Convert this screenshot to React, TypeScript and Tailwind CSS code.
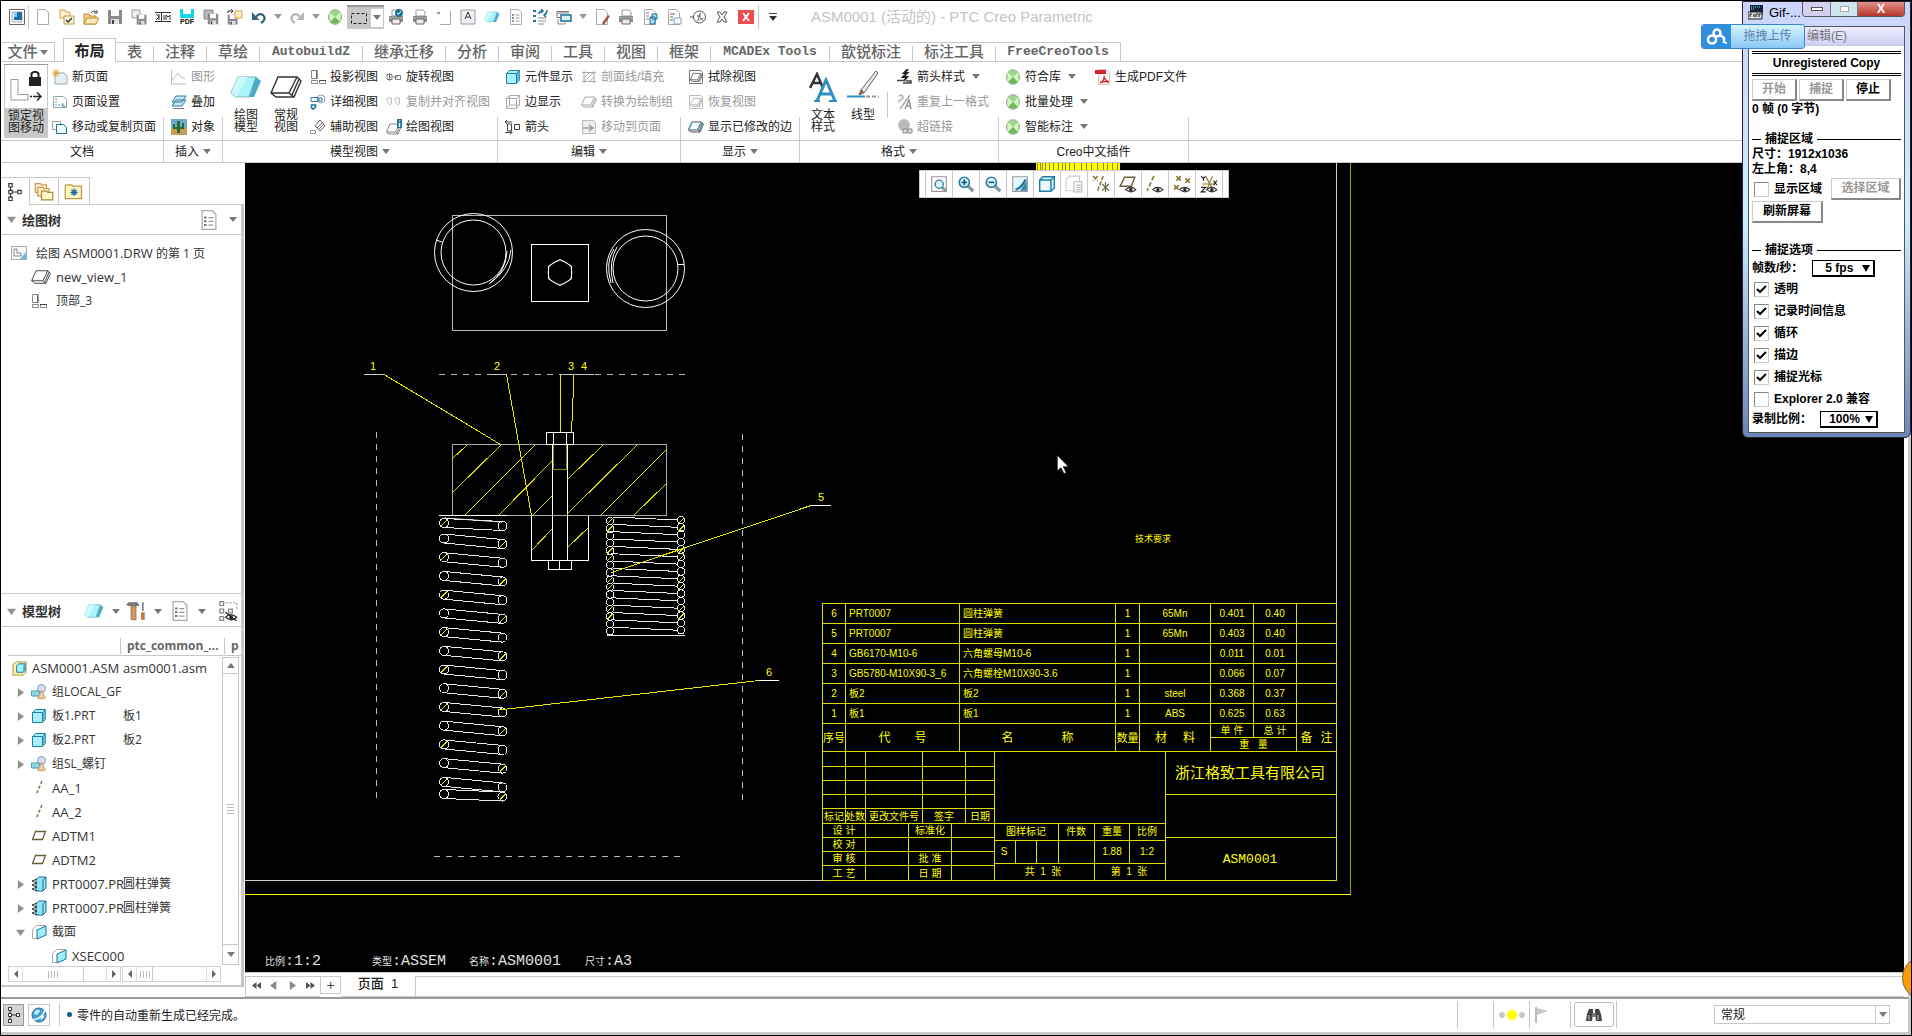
import { ReactNode } from "react";

const LINE = "#c8c8c8";

/* ---------- icons, all drawn on a 16x16 grid ---------- */

const page = <path d="M2.500 .5h8l3 3v12h-11z" fill="#fff" stroke="#aaa" />;
const disk = (
  <>
    <path d="M1 1h14v14H1z" fill="#8a8a8a" />
    <path d="M4 1h8v6H4z" fill="#fff" />
    <path d="M4 10h8v5H4z" fill="#ddd" />
    <path d="M5 11h2v4H5z" fill="#444" />
  </>
);
const printer = (
  <>
    <path d="M4 1h7l2 2v4H4z" fill="#fff" stroke="#999" />
    <path d="M1 7h14v6H1z" fill="#8c8c8c" />
    <path d="M1 9h14" stroke="#b5b5b5" />
    <path d="M4 10h8v5H4z" fill="#eee" stroke="#666" />
  </>
);
const slab = (
  <>
    <path d="M4 3h9L9.500 13H3L.5 11z" fill="#a9f3fb" stroke="#7fb6c4" strokeWidth=".6" />
    <path d="M4 3h5L3 13 .5 11z" fill="#c9fafd" />
    <path d="M13 3l2.500 2-3.500 8H9.500z" fill="#4fa9c8" />
  </>
);
const slabLine = (c: string, w = 1) => (
  <path
    d="M4 3h9.500L15.500 5 12 13H3L.5 11zM.5 11h9l2.500 2M13.500 3L9.500 11M14.500 4l-3.500 8"
    fill="none"
    stroke={c}
    strokeWidth={w}
  />
);
const cube = (c: string) => (
  <>
    <path d="M1.500 4.500l3-3h10v10l-3 3h-10z" fill={c} stroke="#1d7fa8" />
    <path d="M11.500 4.500l3-3v10l-3 3z" fill="#5fb9d8" />
    <path d="M11.500 14.500v-10h-10M11.500 4.500l3-3" fill="none" stroke="#1d7fa8" />
  </>
);
const list = (
  <>
    {page}
    <path d="M4 6h2M4 9h2M4 12h2" stroke="#777" strokeWidth="1.500" />
    <path d="M7.500 6h4M7.500 9h4M7.500 12h4" stroke="#999" />
  </>
);
const ball = (
  <>
    <ellipse cx="8" cy="8" rx="6.500" ry="7.300" fill="#9bd88a" stroke="#9aa69a" />
    <path d="M2.500 3l5.500 5-5.500 5zM13.500 3L8 8l5.500 5z" fill="#d2f6bd" />
    <path d="M3.500 13L8 8l4.500 5c-3 2-6 2-9 0z" fill="#6fb95c" />
  </>
);
const lens = (
  <>
    <path d="M9.500 9.500l5 5" stroke="#8a9aa3" strokeWidth="3" />
    <circle cx="6.500" cy="6.500" r="4.500" fill="#dff4fb" stroke="#2c7fa5" strokeWidth="1.500" />
  </>
);
const eye = (
  <>
    <path d="M6 13q4-4 9 0-4 4-9 0z" fill="#fff" stroke="#333" />
    <circle cx="10.500" cy="13" r="1.500" fill="#222" />
  </>
);
const curl = (c: string) => (
  <>
    <path d="M5 8Q8 3.500 12 6q4 4-2 8" fill="none" stroke={c} strokeWidth="2.200" />
    <path d="M1 3v8h7.500z" fill={c} />
  </>
);

const ICONS: Record<string, ReactNode> = {
  logo: (
    <>
      <path d="M.5 .5h15v15H.5z" fill="#fff" stroke="#666" />
      <path d="M3 3h10v10H3z" fill="#e8f0f4" stroke="#888" strokeWidth=".6" />
      <path d="M5 3h8v8H5z" fill="#1b6fa3" />
      <path d="M5 3h3v5H5z" fill="#7ed0ee" />
    </>
  ),
  page,
  openCheck: (
    <>
      <path d="M1 1h5l1 2h4v6H1z" fill="#fff3cf" stroke="#d39b3e" />
      <path d="M5 7h10v8H5z" fill="#fff9dd" stroke="#b99a4b" />
      <path d="M7 11l2 2 4-4" fill="none" stroke="#333" strokeWidth="1.500" />
    </>
  ),
  open: (
    <>
      <path d="M1 5h5l1 2h6v8H1z" fill="#f5cf7a" stroke="#b98b3a" />
      <path d="M4 9h12l-3 6H1z" fill="#fde9b2" stroke="#b98b3a" />
      <path d="M8 4q3-4 6 0M14 1v3h-3" fill="none" stroke="#444" />
    </>
  ),
  disk,
  diskPage: (
    <>
      <path d="M1 1h8v8H1z" fill="#eee" stroke="#999" />
      <g transform="translate(5 5) scale(.7)">{disk}</g>
    </>
  ),
  dim: (
    <>
      <path d="M0 3.500h16M0 12.500h16M6.500 3v10" stroke="#333" />
      <path d="M1 5l3 3-3 3M4 5v6M9 11V6M11 11V6l2 2 2-2v5" fill="none" stroke="#333" />
    </>
  ),
  pdf: (
    <>
      <path d="M1 0h14v9H1z" fill="#12d7e4" />
      <path d="M4 0h8v5H4z" fill="#fff" />
      <text x="8" y="15" textAnchor="middle" fontSize="7" fontWeight="900" fontFamily="Liberation Sans" fill="#111">PDF</text>
    </>
  ),
  disks: (
    <>
      <path d="M1 1h9v9H1z" fill="#bbb" stroke="#888" />
      <g transform="translate(4 4) scale(.75)">{disk}</g>
    </>
  ),
  diskOut: (
    <>
      <g transform="translate(0 5) scale(.7)">{disk}</g>
      <path d="M8 2h7v7H8z" fill="#fff0c0" stroke="#d0a050" />
      <path d="M1 4V2h5M4 0l2 2-2 2" fill="none" stroke="#333" />
    </>
  ),
  undo: curl("#336270"),
  redo: <g transform="translate(16 0) scale(-1 1)">{curl("#b5b5b5")}</g>,
  ball,
  select: <path d="M.5 3.500h15v10H.5z" fill="none" stroke="#222" strokeDasharray="3 2" />,
  printCheck: (
    <>
      {printer}
      <circle cx="11" cy="4" r="4" fill="#1d6f9c" />
      <path d="M9 4l1.500 1.500L13 2" fill="none" stroke="#fff" />
    </>
  ),
  printer,
  sheet: (
    <>
      <path d="M14.500 2v13M4 15.500h11" stroke="#aaa" />
      <path d="M1 4h3" stroke="#333" />
    </>
  ),
  letterA: (
    <>
      <path d="M1 1h14v14H1z" fill="#eef0f5" stroke="#999" />
      <path d="M5 10l3-7 3 7M6 8h4" fill="none" stroke="#333" />
    </>
  ),
  slab,
  list,
  listSync: (
    <>
      <path d="M1 2h3M1 7h3M1 12h3" stroke="#1d6f9c" strokeWidth="2" />
      <path d="M6 9h8M6 12h8M6 15h6" stroke="#888" />
      <path d="M7 5q0-3 4-3M9 0l2 2-2 2M15 1q0 4-3 5M14 8l-2-2 2-2" fill="none" stroke="#1d6f9c" strokeWidth="1.500" />
    </>
  ),
  windows: (
    <>
      <path d="M1 2.500h12M1 2.500v6h3M1 4h12" fill="none" stroke="#777" />
      <path d="M5 6h10v6H5z" fill="#dff1f8" stroke="#1d6f9c" strokeWidth="1.500" />
      <path d="M2 10v5h7v-2" fill="none" stroke="#888" />
    </>
  ),
  erase: (
    <>
      {page}
      <path d="M8 14l6-8 2 1-6 9z" fill="#a5543f" />
    </>
  ),
  pagePlus: (
    <>
      {page}
      <path d="M8 8h5v7H8zM10 5h5v5h-5z" fill="#a9dcf0" stroke="#1d6f9c" />
      <path d="M4 4h3M4 7h3M4 10h3" stroke="#888" />
    </>
  ),
  pageGrid: (
    <>
      {page}
      <path d="M8 9h7v6H8z" fill="#fff" stroke="#7aa3bb" />
      <path d="M4 5h5M4 8h3M4 11h3" stroke="#666" />
    </>
  ),
  fx: (
    <>
      <circle cx="9.500" cy="8" r="6" fill="none" stroke="#555" />
      <path d="M0 8h4M7 12q1.500 0 2-4t2-4M7 7h4M10 8.500l3 3M13 8.500l-3 3" fill="none" stroke="#555" />
    </>
  ),
  cross: <path d="M3 3h3l2 3 2-3h3l-3 5 3 5h-3l-2-3-2 3H3l3-5z" fill="none" stroke="#555" />,
  close: (
    <>
      <path d="M0 1h16v14H0z" fill="#ee4d4d" />
      <path d="M5 4l6 8M11 4l-6 8" stroke="#fff" strokeWidth="2" />
    </>
  ),
  lock: (
    <svg viewBox="0 0 32 32">
      <path d="M1 8.500h7v15h10V29H1z" fill="#fff" stroke="#999" />
      <path d="M19 6h12v9H19z" fill="#222" />
      <path d="M21.500 6V2.500q3.500-3.500 7 0V6" fill="none" stroke="#222" strokeWidth="2" />
      <path d="M20 25.500h2M23 25.500h7M27 21.500l4 4-4 4" fill="none" stroke="#222" strokeWidth="1.500" />
    </svg>
  ),
  newPage: (
    <>
      <path d="M3 4h9l3 3v8H3z" fill="#e8eef6" stroke="#9aa" />
      <path d="M4 0v8M0 4h8M1 1l6 6M7 1L1 7" stroke="#e0a020" />
    </>
  ),
  pageSetup: (
    <>
      <path d="M1.500 2.500h10l3 3v8h-13z" fill="#fff" stroke="#8aa" />
      <path d="M3 5h3M3 8h2M3 11h8" stroke="#888" strokeDasharray="2 1" />
      <path d="M10 8l4 5h-4z" fill="#8fb8d8" />
    </>
  ),
  movePage: (
    <>
      <path d="M.5 2.500h8v8h-8z" fill="#fff" stroke="#999" />
      <path d="M4.500 5.500h7l3 3v6h-10z" fill="#eef9fc" stroke="#1d6f9c" />
    </>
  ),
  graph: <path d="M.5 1v14H15M1 11l6-7 3 4 4 2" fill="none" stroke="#bbb" />,
  overlay: (
    <>
      <path d="M5 2h10l-4 6H1zM5 6h10l-4 6H1z" fill="#bfe4f2" stroke="#357f9f" />
      <path d="M2 14.500h11" stroke="#777" />
    </>
  ),
  image: (
    <>
      <path d="M0 0h16v16H0z" fill="#6ea9c9" />
      <path d="M0 9h16v7H0z" fill="#c79a56" />
      <path d="M6 2h3v12H6zM2 5h2v3h2v2H2zM9 8h2V4h2v6H9z" fill="#2d6b35" />
    </>
  ),
  proj: (
    <>
      <path d="M1.500 1.500h5v8h-5zM1.500 11.500h6v3h-6zM9.500 11.500h6v3h-6z" fill="none" stroke="#888" />
      <path d="M7 1v9M9 11.500h7" stroke="#444" />
    </>
  ),
  detail: (
    <>
      <circle cx="11" cy="5" r="4" fill="none" stroke="#99b" />
      <path d="M1 3.500h7v4H1zM9 4h3v3H9z" fill="none" stroke="#2a7ba3" />
      <path d="M1.500 11h4v2l-2 2-2-1z" fill="#fff" stroke="#1d6f9c" strokeWidth="1.500" />
    </>
  ),
  aux: (
    <>
      <path d="M10 1l5 6-5 5-5-5zM12 4l-5 5M13.500 5.500l-5 5" fill="none" stroke="#666" />
      <path d="M.5 11.500h5v3h-5z" fill="none" stroke="#999" />
    </>
  ),
  rotate: <path d="M1 5.500h5v5H1zM9.500 6.500h5v4h-5zM3 8h2M7 8h5M3.500 4v8" fill="none" stroke="#777" />,
  align: <path d="M1 4h4.500v5l-1.500 2-3-4zM9 4h4.500v5l-1.500 2-3-4z" fill="none" stroke="#bbb" />,
  info: (
    <>
      <g transform="translate(0 2)">{slabLine("#888")}</g>
      <path d="M11 0h5v9h-5z" fill="#1d6f9c" />
      <path d="M13.500 1.500v1M13.500 4v4" stroke="#fff" strokeWidth="1.500" />
    </>
  ),
  cube: cube("#a8f0fa"),
  cubeLine: <path d="M1.500 4.500l3-3h10v10l-3 3h-10zM11.500 14.500v-10h-10M11.500 4.500l3-3M4.500 2v9h10M4.500 11l-3 3" fill="none" stroke="#aaa" />,
  arrows: <path d="M0 3h7M2 1L0 3l2 2M0 13.500h7M5 11.500l2 2-2 2M2.500 5v7h4V5zM9.500 5.500h5v5h-5z" fill="none" stroke="#444" />,
  hatch: <path d="M3 2v12M13 2v12M1 3.500h14M1 12.500h14M3 9l6-6M3 13l10-10M8 13l5-5" fill="none" stroke="#aaa" />,
  convert: slabLine("#aaa"),
  toPage: (
    <>
      <path d="M1.500 1.500h11l2 2v11h-13z" fill="#eee" stroke="#bbb" />
      <path d="M2 9h9M8 6l4 3-4 3" fill="none" stroke="#999" strokeWidth="1.500" />
    </>
  ),
  eraseView: (
    <>
      <path d="M1.500 1.500h11l2 2v11h-13z" fill="none" stroke="#777" />
      <g transform="translate(2 2) scale(.8)">{slabLine("#555")}</g>
    </>
  ),
  resumeView: (
    <>
      <path d="M1.500 1.500h11l2 2v11h-13z" fill="none" stroke="#bbb" />
      <g transform="translate(2 2) scale(.8)">{slabLine("#aaa")}</g>
    </>
  ),
  slabLine: slabLine("#333", 0.7),
  edges: (
    <>
      {slabLine("#555")}
      <path d="M4 3L.5 11M13.500 3L9.500 11" stroke="#3aa5c5" strokeWidth="1.500" />
    </>
  ),
  arrowStyle: (
    <>
      <path d="M11 0L7 4h3L6 8h4l-3 4" fill="none" stroke="#222" strokeWidth="2" />
      <path d="M0 11.500h8M9 12h5v2H6" fill="none" stroke="#444" strokeWidth="1.500" />
    </>
  ),
  repeat: (
    <>
      <path d="M2 2q4-2 4 2L1 8M13 1L3 15" fill="none" stroke="#aaa" strokeWidth="1.500" />
      <path d="M8 15l4-9 2 9M9 12h5" fill="none" stroke="#999" strokeWidth="1.500" />
    </>
  ),
  link: (
    <>
      <circle cx="7" cy="6" r="6" fill="#bbb" />
      <path d="M6 10h4v4H6zM11 10h4v4h-4z" fill="#ddd" stroke="#888" />
    </>
  ),
  acrobat: (
    <>
      <path d="M3.500 .5h8l3 3v12h-11z" fill="#f4f4f4" stroke="#ccc" />
      <path d="M0 1h11v4H0z" fill="#d6232b" />
      <path d="M5 14q5-3 4-7 0 4 5 6-5-1-9 1z" fill="none" stroke="#d6232b" strokeWidth="1.300" />
    </>
  ),
  tree: (
    <path d="M2.500 .5h3v3h-3zM2.500 6.500h3v3h-3zM2.500 12.500h3v3h-3zM10.500 6.500h3v3h-3zM4 4v2M4 10v2M6 8h4" fill="#fff" stroke="#333" />
  ),
  folders: (
    <>
      <path d="M1 2h4l1 1h4v6H1z" fill="#fff3cf" stroke="#c99a56" />
      <path d="M3 5h4l1 1h4v6H3z" fill="#fff3cf" stroke="#c99a56" />
      <path d="M6 8h4l1 1h4v6H6z" fill="#fdf9c8" stroke="#a98f35" />
    </>
  ),
  folderStar: (
    <>
      <path d="M1 4l1-1h4l1 1h7v10H1z" fill="#fdf5c4" stroke="#b99a4b" />
      <path d="M8 6v6M5 9h6M6 7l4 4M10 7l-4 4" stroke="#1d6f9c" />
    </>
  ),
  drawing: (
    <>
      <path d="M.5 1.500h15v13H.5z" fill="#f6f8fb" stroke="#aaa" />
      <path d="M3 4h3v4h4v3H3z" fill="none" stroke="#888" />
      <path d="M9 14h6V7z" fill="#6fb7dc" />
    </>
  ),
  tools: (
    <>
      <path d="M4 4h4v11H4z" fill="#d39a5e" stroke="#8c6a48" strokeWidth=".6" />
      <path d="M0 3l2-2h7l2 3H2z" fill="#777" />
      <path d="M13.500 1v7" stroke="#555" />
      <path d="M12 9h3v6h-3z" fill="#c77b3a" />
    </>
  ),
  treeEye: (
    <>
      <path d="M1.500 .5h3v3h-3zM1.500 6.500h3v3h-3zM1.500 12.500h3v3h-3zM8.500 6.500h3v3h-3z" fill="none" stroke="#888" />
      <path d="M6 1.500h9v6" fill="none" stroke="#aaa" strokeDasharray="2 1" />
      {eye}
      <path d="M6 9l9 7" stroke="#222" />
    </>
  ),
  asm: (
    <>
      <path d="M1 4l3-3h11v11l-3 3H1z" fill="#fdf3b0" stroke="#a9903c" />
      <path d="M5 5l2-2h7v7l-2 2H5z" fill="#a8f3fb" stroke="#1d6f9c" />
      <path d="M12 5l2-2v7l-2 2z" fill="#4aa3c8" />
    </>
  ),
  shapes: (
    <>
      <circle cx="10.500" cy="4.500" r="4" fill="#d3def3" stroke="#7f98bf" />
      <path d="M.5 7h8v5h-8z" fill="#8ed8e6" stroke="#4a9cb4" />
      <path d="M10.500 6l4 8q-4 2-8 0z" fill="#e8cb9a" stroke="#a87f45" strokeWidth=".6" />
    </>
  ),
  axis: <path d="M11 1L5 15" stroke="#7a6a3a" strokeWidth="1.500" strokeDasharray="3 2" />,
  plane: <path d="M4.500 3.500h10l-3 8h-10z" fill="none" stroke="#6b6140" strokeWidth="1.300" />,
  spring: (
    <>
      <path d="M5 4l3-3h7v11l-3 3H5z" fill="#8fe6f2" stroke="#1d6f9c" />
      <path d="M12 15V4l3-3" fill="none" stroke="#1d6f9c" />
      <path d="M6 3L1 5l5 2-5 2 5 2-5 2 5 2" fill="none" stroke="#333" />
    </>
  ),
  section: (
    <>
      <path d="M1.500 5.500l4-4h9M1.500 5.500v9h4" fill="none" stroke="#aaa" />
      <path d="M6 6l9-4v9l-9 4z" fill="#9df0fa" stroke="#1d6f9c" />
    </>
  ),
  globe: (
    <>
      <circle cx="8" cy="8" r="7" fill="#3d9fd3" stroke="#2a6f9a" />
      <path d="M4 4q4-3 5 0l-3 4-3-1zM9 9l4-1q1 3-3 5z" fill="#cfeefa" />
      <path d="M1 13Q12 12 14 2" fill="none" stroke="#eaf6fb" strokeWidth="1.500" />
    </>
  ),
  refit: (
    <>
      <path d="M1.500 1.500h13v13h-13z" fill="none" stroke="#999" />
      <g transform="translate(3 3) scale(.8)">{lens}</g>
    </>
  ),
  zoomIn: (
    <>
      {lens}
      <path d="M4 6.500h5M6.500 4v5" stroke="#0d5c85" strokeWidth="1.500" />
    </>
  ),
  zoomOut: (
    <>
      {lens}
      <path d="M4 6.500h5" stroke="#0d5c85" strokeWidth="1.500" />
    </>
  ),
  repaint: (
    <>
      <path d="M1.500 1.500h13v13h-13z" fill="#e4f8fb" stroke="#999" />
      <path d="M14 5v9H8z" fill="#2f88ad" />
      <path d="M4 13q5-1 9-9" fill="none" stroke="#1d6f9c" strokeWidth="2" />
    </>
  ),
  display: (
    <>
      <path d="M1.500 4.500l3-3h10v10l-3 3h-10z" fill="#e9fbfe" stroke="#1d7fa8" strokeWidth="1.300" />
      <path d="M11.500 14.500v-10h-10M11.500 4.500l3-3" fill="none" stroke="#1d7fa8" strokeWidth="1.300" />
    </>
  ),
  saved: (
    <>
      <path d="M1 4l3-3h9v10l-3 3H1z" fill="#fff" stroke="#ccc" />
      <path d="M8 6h7v9H8z" fill="#fff" stroke="#bbb" />
      <path d="M10 9h4M10 11h4M10 13h4" stroke="#bbb" />
    </>
  ),
  datum: (
    <>
      <path d="M1 1l4 4M5 1L1 5M10 1L5 14" stroke="#8a7530" strokeWidth="1.300" strokeDasharray="4 1" />
      <path d="M9 8l6 6M15 8l-6 6M12 6v9" stroke="#6d6548" />
    </>
  ),
  planeEye: (
    <>
      <path d="M5 2h9l-3 8H1z" fill="none" stroke="#6b6140" strokeWidth="1.300" />
      {eye}
    </>
  ),
  axisEye: (
    <>
      <path d="M7 1L1 14" stroke="#8a7530" strokeWidth="1.500" strokeDasharray="4 2" />
      {eye}
    </>
  ),
  pointEye: (
    <>
      <path d="M3 1l4 4M7 1L3 5M11 3l4 4M15 3l-4 4M1 9l4 4M5 9l-4 4" stroke="#8a7530" strokeWidth="1.300" />
      {eye}
    </>
  ),
  csysEye: (
    <>
      <path d="M1 1l2 2 2-2M3 3v2M12 5l3 4M15 5l-3 4M1 11h4l-4 4h4" fill="none" stroke="#222" />
      <path d="M5 1l7 13M11 1L6 13M2 8h11" stroke="#8a7530" />
      {eye}
    </>
  ),
  flag: (
    <>
      <path d="M2 0v16" stroke="#bbb" strokeWidth="2" />
      <path d="M3 1l11 3L3 8z" fill="#c2cbc8" />
    </>
  ),
  binoculars: (
    <>
      <path d="M3 2h4v5l-1 7H0l1-7zM9 2h4l2 5 1 7h-6L9 7z" fill="#444" />
      <path d="M6 6h4v4H6z" fill="#777" />
      <path d="M3 8v5M12 8v5" stroke="#ccc" />
    </>
  ),
  gif: (
    <>
      <path d="M2 1h13v9H2z" fill="#123" />
      <path d="M3 3h9M3 5h4" stroke="#8ee" strokeDasharray="1 1" />
      <path d="M0 8h14v7H0z" fill="#ddd" stroke="#222" />
      <path d="M2 13v-3h2M6 10v3M8 13v-3h2M11 13v-3h2" fill="none" stroke="#111" />
    </>
  ),
};

const Icon = ({ name, className = "size-4" }: { name: string; className?: string }) => (
  <svg viewBox="0 0 16 16" className={`${className} shrink-0`} aria-hidden="true">
    {ICONS[name]}
  </svg>
);

const Caret = ({ className = "text-[#777]" }: { className?: string }) => (
  <svg viewBox="0 0 8 5" className={`h-[5px] w-2 shrink-0 ${className}`} aria-hidden="true">
    <path d="M0 0h8L4 5z" fill="currentColor" />
  </svg>
);

/* ---------- quick access bar ---------- */

const QUICK_FILE = ["page", "openCheck", "open", "disk", "diskPage", "dim", "pdf", "disks", "diskOut", "undo"];
const QUICK_PRINT = ["printCheck", "printer", "sheet", "letterA", "slab", "list", "listSync", "windows"];
const QUICK_END = ["erase", "printer", "pagePlus", "pageGrid", "fx", "cross", "close"];

const QuickButton = ({ name }: { name: string }) => (
  <button aria-label={name} className="flex w-6 justify-center">
    <Icon name={name} />
  </button>
);

const CaretButton = () => (
  <button aria-label="more" className="flex w-[14px] justify-center">
    <Caret className="text-[#999]" />
  </button>
);

const QuickAccess = () => (
  <header className="flex h-[31px] shrink-0 items-center">
    <button aria-label="Creo" className="flex w-[27px] justify-center pl-1">
      <Icon name="logo" />
    </button>
    <span className="mr-[2px] h-6 w-px bg-[#c8c8c8]" />
    {QUICK_FILE.map((n) => <QuickButton key={n} name={n} />)}
    <CaretButton />
    <QuickButton name="redo" />
    <CaretButton />
    <QuickButton name="ball" />
    <div className="flex h-6 w-[37px] items-center border-t-2 border-[#999] bg-[#c8c8c8]">
      <button aria-label="select" className="flex w-6 justify-center">
        <Icon name="select" />
      </button>
      <button aria-label="more" className="mr-px flex h-[18px] flex-1 items-center justify-center bg-white">
        <Caret />
      </button>
    </div>
    {QUICK_PRINT.map((n) => <QuickButton key={n} name={n} />)}
    <CaretButton />
    {QUICK_END.map((n) => <QuickButton key={n} name={n} />)}
    <span className="h-6 w-px bg-[#c8c8c8]" />
    <button aria-label="customize" className="flex w-7 flex-col items-center gap-[2px]">
      <span className="h-px w-2 bg-[#444]" />
      <Caret className="text-[#333]" />
    </button>
    <h1 className="ml-6 text-[15px] leading-5 whitespace-nowrap text-[#c4c4c4]">ASM0001 (活动的) - PTC Creo Parametric</h1>
  </header>
);

/* ---------- tabs ---------- */

const TABS = [
  { name: "表", width: "w-[38px]" },
  { name: "注释", width: "w-[53px]" },
  { name: "草绘", width: "w-[53px]" },
  { name: "AutobuildZ", width: "w-[103px]" },
  { name: "继承迁移", width: "w-[83px]" },
  { name: "分析", width: "w-[53px]" },
  { name: "审阅", width: "w-[53px]" },
  { name: "工具", width: "w-[53px]" },
  { name: "视图", width: "w-[53px]" },
  { name: "框架", width: "w-[53px]" },
  { name: "MCADEx Tools", width: "w-[119px]" },
  { name: "歆锐标注", width: "w-[83px]" },
  { name: "标注工具", width: "w-[83px]" },
  { name: "FreeCreoTools", width: "w-[125px]" },
];

const isLatin = (s: string) => /^[A-Za-z ]+$/.test(s);

const Tabs = () => (
  <nav className="flex h-[30px] shrink-0 items-end whitespace-nowrap text-[15px] leading-[18px] font-medium text-[#666]">
    <button className="flex h-5 w-[54px] items-center justify-center gap-[2px] border-y border-r border-[#c8c8c8]">
      文件 <Caret />
    </button>
    <span className="h-5 w-2 border-b border-[#c8c8c8]" />
    <button className="h-6 w-[53px] border-x border-t border-[#c8c8c8] font-bold text-[#222]">布局</button>
    {TABS.map((t, i) => (
      <button key={t.name} className={`flex h-5 items-end border-y border-[#c8c8c8] ${t.width}`}>
        <span className={isLatin(t.name) ? "flex-1 font-['Liberation_Mono',monospace] text-[13px] font-bold" : "flex-1"}>
          {t.name}
        </span>
        <span className={i === TABS.length - 1 ? "h-[18px] w-px bg-[#c8c8c8]" : "h-[15px] w-px bg-[#c8c8c8]"} />
      </button>
    ))}
    <span className="h-5 flex-1 border-b border-[#c8c8c8]" />
  </nav>
);

/* ---------- ribbon ---------- */

type Cmd = { icon: string; label: string; off?: boolean; more?: boolean };

const Column = ({ items, className = "" }: { items: Cmd[]; className?: string }) => (
  <div className={`flex flex-col ${className}`}>
    {items.map((c) => (
      <button key={c.label} disabled={c.off} className={`flex h-[25px] items-center gap-1 ${c.off ? "text-[#999]" : "text-[#222]"}`}>
        <Icon name={c.icon} />
        {c.label}
        {c.more && <span className="pl-[3px]"><Caret /></span>}
      </button>
    ))}
  </div>
);

const Big = ({ lines, children, className = "" }: { lines: string[]; children: ReactNode; className?: string }) => (
  <button className={`flex w-10 flex-col items-center leading-3 ${className}`}>
    <span className="flex h-[45px] items-center">{children}</span>
    {lines.map((l) => <span key={l}>{l}</span>)}
  </button>
);

const Group = ({ label, more, width, children }: { label: string; more?: boolean; width: string; children: ReactNode }) => (
  <section className={`flex ${width}`}>
    <div className="flex min-w-0 flex-1 flex-col">
      <div className="flex h-[78px] pt-[2px]">{children}</div>
      <div className="flex h-[22px] items-center justify-center gap-1 border-t border-[#c8c8c8]">
        {label} {more && <Caret />}
      </div>
    </div>
    <span className="h-[45px] w-px self-end bg-[#c8c8d8]" />
  </section>
);

const Ribbon = () => (
  <div className="flex h-[101px] shrink-0 border-b border-[#c8c8c8] whitespace-nowrap text-[12px] leading-[14px] text-[#222]">
    <Group label="文档" width="w-[163px]">
      <button className="ml-[3px] flex h-[74px] w-[44px] flex-col items-center border-t border-[#999] bg-[#c8c8c8] leading-3">
        <span className="mb-[2px] flex h-[43px] w-[42px] items-center justify-center bg-white">
          <Icon name="lock" className="size-8" />
        </span>
        <span>锁定视</span>
        <span>图移动</span>
      </button>
      <Column className="pl-[4px]" items={[
        { icon: "newPage", label: "新页面" },
        { icon: "pageSetup", label: "页面设置" },
        { icon: "movePage", label: "移动或复制页面" },
      ]} />
    </Group>
    <Group label="插入" more width="w-[59px]">
      <Column className="pl-[7px]" items={[
        { icon: "graph", label: "图形", off: true },
        { icon: "overlay", label: "叠加" },
        { icon: "image", label: "对象" },
      ]} />
    </Group>
    <Group label="模型视图" more width="w-[275px]">
      <Big lines={["绘图", "模型"]} className="ml-[3px]">
        <Icon name="slab" className="size-8" />
      </Big>
      <Big lines={["常规", "视图"]}>
        <Icon name="slabLine" className="size-8" />
      </Big>
      <Column className="pl-[4px]" items={[
        { icon: "proj", label: "投影视图" },
        { icon: "detail", label: "详细视图" },
        { icon: "aux", label: "辅助视图" },
      ]} />
      <Column className="pl-2" items={[
        { icon: "rotate", label: "旋转视图" },
        { icon: "align", label: "复制并对齐视图", off: true },
        { icon: "info", label: "绘图视图" },
      ]} />
    </Group>
    <Group label="编辑" more width="w-[183px]">
      <Column className="pl-[7px]" items={[
        { icon: "cube", label: "元件显示" },
        { icon: "cubeLine", label: "边显示" },
        { icon: "arrows", label: "箭头" },
      ]} />
      <Column className="pl-2" items={[
        { icon: "hatch", label: "剖面线/填充", off: true },
        { icon: "convert", label: "转换为绘制组", off: true },
        { icon: "toPage", label: "移动到页面", off: true },
      ]} />
    </Group>
    <Group label="显示" more width="w-[119px]">
      <Column className="pl-[7px]" items={[
        { icon: "eraseView", label: "拭除视图" },
        { icon: "resumeView", label: "恢复视图", off: true },
        { icon: "edges", label: "显示已修改的边" },
      ]} />
    </Group>
    <Group label="格式" more width="w-[199px]">
      <Big lines={["文本", "样式"]} className="ml-[3px]">
        <svg viewBox="0 0 28 30" className="h-[30px] w-7">
          <path d="M1 16L8 2l6 14M4 11h8" fill="none" stroke="#333" strokeWidth="2.500" />
          <path d="M8 29L17 8l9 21M12 22h11" fill="none" stroke="#2f8fc0" strokeWidth="3" />
          <path d="M5 29h6M20 29h8" stroke="#2f8fc0" strokeWidth="2" />
        </svg>
      </Big>
      <Big lines={["线型"]}>
        <svg viewBox="0 0 32 30" className="mb-[6px] h-[30px] w-8">
          <path d="M14 21L29 2l2 2-14 20-5 2z" fill="#e8e8e8" stroke="#666" />
          <path d="M12 26l2-6 3 3z" fill="#8a6242" />
          <path d="M0 27.500h18" stroke="#2f8fc0" strokeWidth="2" />
          <path d="M19 27.500h13" stroke="#999" strokeWidth="2" strokeDasharray="4 2" />
        </svg>
      </Big>
      <span className="ml-[4px] mt-[28px] h-[26px] w-px bg-[#c8c8c8]" />
      <Column className="pl-[9px]" items={[
        { icon: "arrowStyle", label: "箭头样式", more: true },
        { icon: "repeat", label: "重复上一格式", off: true },
        { icon: "link", label: "超链接", off: true },
      ]} />
    </Group>
    <Group label="Creo中文插件" width="w-[190px]">
      <Column className="pl-[6px]" items={[
        { icon: "ball", label: "符合库", more: true },
        { icon: "ball", label: "批量处理", more: true },
        { icon: "ball", label: "智能标注", more: true },
      ]} />
      <Column className="pl-[7px]" items={[{ icon: "acrobat", label: "生成PDF文件" }]} />
    </Group>
    <div className="h-[22px] flex-1 self-end border-t border-[#c8c8c8]" />
  </div>
);

/* ---------- left panel ---------- */

const Triangle = ({ open = false }: { open?: boolean }) => (
  <svg viewBox="0 0 10 10" className="size-[9px] shrink-0" aria-hidden="true">
    <path d={open ? "M0 2h10L5 9z" : "M2 0l7 5-7 5z"} fill="#909090" />
  </svg>
);

type Node = { icon: string; name: string; value?: string; level: number; arrow?: "open" | "closed" };

const MODEL_TREE: Node[] = [
  { icon: "asm", name: "ASM0001.ASM", value: "asm0001.asm", level: 0 },
  { icon: "shapes", name: "组LOCAL_GF", level: 1, arrow: "closed" },
  { icon: "cube", name: "板1.PRT", value: "板1", level: 1, arrow: "closed" },
  { icon: "cube", name: "板2.PRT", value: "板2", level: 1, arrow: "closed" },
  { icon: "shapes", name: "组SL_螺钉", level: 1, arrow: "closed" },
  { icon: "axis", name: "AA_1", level: 1 },
  { icon: "axis", name: "AA_2", level: 1 },
  { icon: "plane", name: "ADTM1", level: 1 },
  { icon: "plane", name: "ADTM2", level: 1 },
  { icon: "spring", name: "PRT0007.PR", value: "圆柱弹簧", level: 1, arrow: "closed" },
  { icon: "spring", name: "PRT0007.PR", value: "圆柱弹簧", level: 1, arrow: "closed" },
  { icon: "section", name: "截面", level: 1, arrow: "open" },
  { icon: "section", name: "XSEC000", level: 2 },
];

const INDENT = ["pl-[11px]", "pl-[30px]", "pl-[50px]"];

const hasCjk = (s = "") => /[\u4e00-\u9fff]/.test(s);

const TreeRow = ({ node }: { node: Node }) => (
  <li className="flex h-6 items-center">
    <div className={`relative flex w-[121px] shrink-0 items-center gap-[5px] ${INDENT[node.level]}`}>
      {node.arrow && (
        <button aria-label="toggle" className="absolute left-[15px]">
          <Triangle open={node.arrow === "open"} />
        </button>
      )}
      <Icon name={node.icon} className={node.level === 0 ? "size-[15px]" : "size-4"} />
      <span className={hasCjk(node.name) ? "text-[12px]" : "text-[13px]"}>{node.name}</span>
    </div>
    <span className={hasCjk(node.value) ? "pl-px text-[12px]" : "pl-px text-[13px]"}>{node.value}</span>
  </li>
);

const HScroll = ({ className, thumb }: { className: string; thumb: string }) => (
  <div className={`flex h-4 items-stretch border border-[#d0d0d8] ${className}`}>
    <button aria-label="scroll left" className="flex w-[14px] items-center justify-center border-r border-[#ddd]">
      <svg viewBox="0 0 4 8" className="h-2 w-1"><path d="M4 0v8L0 4z" fill="#666" /></svg>
    </button>
    <span className={`flex items-center justify-center gap-[2px] border-r border-[#c8c8c8] ${thumb}`}>
      {[0, 1, 2, 3].map((i) => <i key={i} className="h-[7px] w-px bg-[#bbb]" />)}
    </span>
    <span className="flex-1" />
    <button aria-label="scroll right" className="flex w-[14px] items-center justify-center border-l border-[#ddd]">
      <svg viewBox="0 0 4 8" className="h-2 w-1"><path d="M0 0v8l4-4z" fill="#666" /></svg>
    </button>
  </div>
);

const SidePanel = () => (
  <aside className="mr-px flex w-[243px] shrink-0 flex-col pb-[10px] font-['Open_Sans','Noto_Sans_CJK_SC',sans-serif] text-[12px] leading-4 whitespace-nowrap text-[#333]">
    <div className="flex h-[42px] items-stretch pt-[14px]">
      <button aria-label="tree" className="flex w-[28px] items-center justify-center border-t border-[#c8c8c8]">
        <Icon name="tree" className="h-5 w-[18px]" />
      </button>
      <button aria-label="folders" className="flex w-[30px] items-center justify-center border border-[#c8c8c8]">
        <Icon name="folders" className="size-5" />
      </button>
      <button aria-label="favorites" className="flex w-[31px] items-center justify-center border border-l-0 border-[#c8c8c8]">
        <Icon name="folderStar" className="size-5" />
      </button>
      <span className="flex-1 border-b border-[#c8c8c8]" />
    </div>
    <div className="flex min-h-0 flex-1 flex-col border-r-[3px] border-b-2 border-[#c8c8c8]">
      <div className="flex h-[30px] shrink-0 items-center gap-[6px] border-b border-[#c8c8c8] pl-[6px]">
        <Triangle open />
        <h2 className="flex-1 text-[13px] font-bold">绘图树</h2>
        <button aria-label="settings"><Icon name="list" className="size-5" /></button>
        <button aria-label="more" className="px-1"><Caret /></button>
      </div>
      <ul className="min-h-0 flex-1 overflow-hidden pt-[6px]">
        <li className="flex h-6 items-center gap-[9px] pl-[10px]"><Icon name="drawing" /><span>绘图 <span className="text-[13px]">ASM0001.DRW</span> 的第 1 页</span></li>
        <li className="flex h-6 items-center gap-[5px] pl-[30px] text-[13px]"><Icon name="slabLine" className="h-5 w-5" />new_view_1</li>
        <li className="flex h-6 items-center gap-[9px] pl-[30px]"><Icon name="proj" />顶部_3</li>
      </ul>
      <div className="flex h-[34px] shrink-0 items-center border-y border-[#c8c8c8] pt-[2px] pl-[6px]">
        <Triangle open />
        <h2 className="flex-1 pl-[6px] text-[13px] font-bold">模型树</h2>
        <button aria-label="display" className="flex items-center gap-2 pr-[6px]"><Icon name="slab" className="size-5" /><Caret /></button>
        <button aria-label="tools" className="flex items-center gap-2 pr-2"><Icon name="tools" className="size-5" /><Caret /></button>
        <button aria-label="columns" className="flex items-center gap-2 pr-3"><Icon name="list" className="size-5" /><Caret /></button>
        <button aria-label="filter" className="pr-[3px]"><Icon name="treeEye" className="size-5" /></button>
      </div>
      <div className="ml-[7px] flex h-[29px] shrink-0 items-end border-b border-[#c8c8c8] pb-[1px] font-bold text-[#666]">
        <span className="ml-[112px] h-4 w-[104px] border-l border-[#c8c8c8] pl-[6px]">ptc_common_...</span>
        <span className="h-4 border-l border-[#c8c8c8] pl-[6px]">p</span>
      </div>
      <div className="flex h-[329px] shrink-0">
        <div className="flex w-[221px] flex-col">
          <ul className="h-[310px]">
            {MODEL_TREE.map((n, i) => <TreeRow key={i} node={n} />)}
          </ul>
          <div className="relative flex gap-px bg-white pl-[7px]">
            <HScroll className="w-[113px]" thumb="w-[61px]" />
            <HScroll className="w-[99px]" thumb="w-4" />
          </div>
        </div>
        <div className="mt-px flex h-[308px] w-[17px] flex-col items-center border border-[#c8c8c8]">
          <button aria-label="scroll up" className="flex h-4 w-full items-center justify-center border-b border-[#c8c8c8]">
            <span className="rotate-180"><Caret /></span>
          </button>
          <span className="flex flex-1 flex-col items-center justify-center gap-[2px]">
            {[0, 1, 2, 3].map((i) => <i key={i} className="h-px w-[7px] bg-[#bbb]" />)}
          </span>
          <button aria-label="scroll down" className="flex h-5 w-full items-center justify-center border-t border-[#c8c8c8]">
            <Caret />
          </button>
        </div>
      </div>
    </div>
  </aside>
);

/* ---------- drawing canvas ---------- */

const LEFT_COILS = [
  [523, 526], ...Array.from({ length: 14 }, (_, i) => [538.5 + i * 18.72, 544 + i * 18.72]), [794, 796.5],
];
const RIGHT_COILS = Array.from({ length: 16 }, (_, i) => 521 + i * 7.35);
const BARS = [0, 3, 5, 8, 12, 16, 21, 25, 28, 32, 37, 44, 49, 54, 60, 66, 70, 75, 80];

const HATCH =
  "M452 459L467 445M452 493L501 445M464 516L535 445M498 516L552 461M532 516L552 496M567 480L603 445M567 514L637 445M600 516L667 449M633 516L667 483M532 550L552 529M567 548L589 527";

const VIEW_GRID =
  "M822.5 751.5V880.5H1336.5V751M845.5 751V823M865.5 751V880M922.5 751V823M965.5 751V823M994.5 751V880M823 766.5H994M823 780.5H994M823 794.5H994M823 808.5H994M823 823.5H1165M823 837.5H994M823 851.5H994M823 865.5H994M908.5 823V880M951.5 823V880M1058.5 823V863M1094.5 823V880M1129.5 823V863M994 840.5H1165M994 863.5H1165M1015.5 840V863M1036.5 840V863M1165.5 751V880M1165 794.5H1336M1165 837.5H1336";

const BLOCK_TEXT: [number, number, string][] = [
  [834, 820, "标记"], [855, 820, "处数"], [894, 820, "更改文件号"], [944, 820, "签字"], [980, 820, "日期"],
  [844, 834, "设 计"], [844, 848, "校 对"], [844, 862, "审 核"], [844, 877, "工 艺"],
  [930, 834, "标准化"], [930, 862, "批 准"], [930, 877, "日 期"],
  [1026, 835, "图样标记"], [1076, 835, "件数"], [1112, 835, "重量"], [1147, 835, "比例"],
  [1004, 855, "S"], [1112, 855, "1.88"], [1147, 855, "1:2"], [1043, 875, "共  1  张"], [1129, 875, "第  1  张"],
];

const BALLOONS: [number, number, string][] = [
  [373, 370, "1"], [497, 370, "2"], [571, 370, "3"], [584, 370, "4"], [821, 501, "5"], [769, 676, "6"],
];

const Drawing = () => (
  <svg width="1659" height="809" viewBox="245 163 1659 809" className="absolute top-0 left-0 max-w-none" fill="none">
    <g shapeRendering="crispEdges">
      <path d="M1336.5 163V603M245 880.5H823" stroke="#ccc" />
      <path d="M1350.5 163V894" stroke="#999900" />
      <path d="M245 894.5H1351" stroke="#ffff00" />
      <path d="M1036 163h84v7h-84z" fill="#ffff00" />
      {BARS.map((b) => <path key={b} d={`M${1037 + b} 163v7`} stroke="#8a8a00" />)}
      <path d="M452.5 215.5H666.5V330.5H452.5z" stroke="#bbb" />
      <path d="M531.5 244.5H588.5V301.5H531.5z" stroke="#fff" />
      <path d="M452.5 444.5H666.5V515.5H452.5z" stroke="#aaa" />
      <path d="M364 374.5H384M487 374.5H507M560 374.5H594" stroke="#ccc" />
      <path d="M439 374.5H685M376.5 432V800M742.5 434V800M434 856.5H680" stroke="#bbb" strokeDasharray="6 6" />
      <path d="M552.5 444V560M567.5 444V560M531.5 516V560.5H588.5V516M548.5 560V569.5H571.5V560M559.5 560V569M546.5 432.5H573.5V444.5H546.5zM553.5 432V444M566.5 432V444M811 505.5H831M759 680.5H779" stroke="#fff" />
      <path d="M553.5 445V469.5H566.5V445" stroke="#888800" />
      <path d={VIEW_GRID} stroke="#dcdc00" />
      <path d={HATCH} stroke="#d8d800" />
    </g>
    <g stroke="#fff">
      <circle cx="473.5" cy="252.5" r="39" />
      <circle cx="473.5" cy="252.5" r="32.500" />
      <path d="M436 240l6 2M489 284Q506 272 507 251M490 283Q509 270 511 250" />
      <circle cx="645.5" cy="268.5" r="39" />
      <circle cx="645.5" cy="268.5" r="32.500" />
      <path d="M678 264.500h6M617 247Q608 262 613 283M614 249Q605 262 611 283" />
      <path d="M560 259.500l11.500 6.500v13L560 285.500 548.500 279v-13z" />
      <circle cx="560" cy="272.500" r="12" strokeWidth=".6" />
      <path d="M439 515.500h68M444 518l58 4" />
    </g>
    <g stroke="#e8e8e8" shapeRendering="crispEdges">
      {LEFT_COILS.map(([l, r]) => (
        <g key={l}>
          <circle cx="444" cy={l} r="4.500" />
          <circle cx="502.5" cy={r} r="4.500" />
          <path d={`M444 ${l - 4.5}L502 ${r - 4.5}M444 ${l + 4.5}L502 ${r + 4.5}`} />
        </g>
      ))}
      {RIGHT_COILS.map((y) => (
        <g key={y}>
          <circle cx="610" cy={y} r="3.700" />
          <circle cx="681" cy={y - 1} r="3.700" />
          <path d={`M613 ${y - 4}L678 ${y - 1}`} />
        </g>
      ))}
      <path d="M607 635.5h78" />
    </g>
    <g stroke="#e8e800" shapeRendering="crispEdges">
      {LEFT_COILS.map(([l, r], i) => (
        <path key={l} d={i % 2 ? `M500 ${r + 3}l6-6` : `M441 ${l + 3}l6-6`} />
      ))}
      {RIGHT_COILS.filter((_, i) => i % 4 < 2).map((y) => (
        <path key={y} d={`M607 ${y + 3}l6-6M678 ${y + 3}l6-6`} />
      ))}
      <path d="M384 374.5L500.5 444.5M506.5 374.5L531.5 516M560.5 375V432M574 375L571.5 433M811 505.5L611.5 572.5M759 680.5L498.5 710" />
    </g>
    <g fill="#ffff00" textAnchor="middle" fontFamily="'Liberation Sans','Noto Sans CJK SC',sans-serif">
      {BALLOONS.map(([x, y, t]) => <text key={t} x={x} y={y} fontSize="11">{t}</text>)}
      {BLOCK_TEXT.map(([x, y, t]) => <text key={`${x}-${y}`} x={x} y={y} fontSize="10" className="whitespace-pre">{t}</text>)}
      <text x="1153" y="542" fontSize="9">技术要求</text>
      <text x="1250" y="778" fontSize="15">浙江格致工具有限公司</text>
      <text x="1250" y="863" fontSize="13" fontFamily="'Liberation Mono',monospace">ASM0001</text>
    </g>
    <g fill="#e0e0e0" fontSize="15" fontFamily="'Liberation Mono','Noto Sans CJK SC',monospace">
      {([[265, "比例", ":1:2"], [372, "类型", ":ASSEM"], [469, "名称", ":ASM0001"], [585, "尺寸", ":A3"]] as const).map(([x, a, b]) => (
        <text key={a} x={x} y="965"><tspan fontSize="10">{a}</tspan>{b}</text>
      ))}
    </g>
    <path d="M1057.5 455.5v15l3.500-3 3 6 2-1-3-6h5z" fill="#fff" stroke="#333" strokeWidth=".5" />
  </svg>
);

const BOM = [
  ["6", "PRT0007", "圆柱弹簧", "1", "65Mn", "0.401", "0.40", ""],
  ["5", "PRT0007", "圆柱弹簧", "1", "65Mn", "0.403", "0.40", ""],
  ["4", "GB6170-M10-6", "六角螺母M10-6", "1", "", "0.011", "0.01", ""],
  ["3", "GB5780-M10X90-3_6", "六角螺栓M10X90-3.6", "1", "", "0.066", "0.07", ""],
  ["2", "板2", "板2", "1", "steel", "0.368", "0.37", ""],
  ["1", "板1", "板1", "1", "ABS", "0.625", "0.63", ""],
];

const BOM_COLS = ["w-[23px]", "w-[114px]", "w-[156px]", "w-6", "w-[71px]", "w-[43px]", "w-[43px]", "w-10"];

const cell = "border border-[#dcdc00] p-0 font-normal";

const BomTable = () => (
  <table className="absolute top-[440px] left-[577px] w-[515px] table-fixed border-collapse text-center font-['Liberation_Sans','Noto_Sans_CJK_SC',sans-serif] text-[10px] leading-[12px] whitespace-nowrap text-[#ffff00]">
    <colgroup>{BOM_COLS.map((w, i) => <col key={i} className={w} />)}</colgroup>
    <tbody>
      {BOM.map((row) => (
        <tr key={row[0]} className="h-5">
          {row.map((v, i) => (
            <td key={i} className={`${cell} ${i === 1 || i === 2 ? "pl-[3px] text-left" : ""}`}>{v}</td>
          ))}
        </tr>
      ))}
    </tbody>
    <tfoot className="text-[12px]">
      <tr className="h-[14px]">
        <th rowSpan={2} className={cell}><span className="text-[11px]">序号</span></th>
        <th rowSpan={2} className={cell}><span className="flex justify-center gap-6"><i className="not-italic">代</i><i className="not-italic">号</i></span></th>
        <th rowSpan={2} className={cell}><span className="flex justify-center gap-12"><i className="not-italic">名</i><i className="not-italic">称</i></span></th>
        <th rowSpan={2} className={cell}><span className="text-[11px]">数量</span></th>
        <th rowSpan={2} className={cell}><span className="flex justify-center gap-4"><i className="not-italic">材</i><i className="not-italic">料</i></span></th>
        <th className={`${cell} text-[10px]`}>单 件</th>
        <th className={`${cell} text-[10px]`}>总 计</th>
        <th rowSpan={2} className={cell}><span className="flex justify-center gap-2"><i className="not-italic">备</i><i className="not-italic">注</i></span></th>
      </tr>
      <tr className="h-[14px]"><th colSpan={2} className={`${cell} text-[10px]`}>重 &nbsp; 量</th></tr>
    </tfoot>
  </table>
);

const VIEW_TOOLS = ["refit", "zoomIn", "zoomOut", "repaint", "display", "saved", "datum", "planeEye", "axisEye", "pointEye", "csysEye"];

const ViewToolbar = () => (
  <div className="absolute top-[7px] left-[674px] flex h-7 border border-[#c8c8c8] bg-white px-[5px]">
    {VIEW_TOOLS.map((n) => (
      <button key={n} aria-label={n} className="flex w-[27px] items-center justify-center border-l border-[#c8c8c8] last:w-7 last:border-r">
        <Icon name={n} className="size-[18px]" />
      </button>
    ))}
  </div>
);

const NAV_PATHS = ["M8 1v8L3 5zM13 1v8L8 5z", "M10 0v10L3 5z", "M5 0v10l7-5z", "M3 1v8l5-4zM8 1v8l5-4z"];

const Canvas = () => (
  <main className="flex min-w-0 flex-1 flex-col pr-1">
    <div className="relative min-h-0 flex-1 overflow-hidden bg-black">
      <Drawing />
      <BomTable />
      <ViewToolbar />
    </div>
    <div className="flex h-[25px] shrink-0 items-start border-t border-[#c8c8c8] pt-[3px]">
      <div className="flex h-[21px] w-[75px] items-center justify-around border-y border-l border-[#c8c8c8] px-px pb-[2px]">
        {NAV_PATHS.map((d, i) => (
          <button key={d} aria-label={`page nav ${i + 1}`} className="flex">
            <svg viewBox="0 0 16 10" className="h-[9px] w-[15px]"><path d={d} fill={i === 0 || i === 3 ? "#555" : "#888"} /></svg>
          </button>
        ))}
      </div>
      <button className="h-[18px] w-[21px] border border-[#c8c8c8] text-[14px] leading-[14px] text-[#444]">+</button>
      <button className="h-[21px] w-[74px] border-b border-[#c8c8c8] pb-1 text-[13px] leading-4 font-medium text-[#222]">页面 &nbsp;1</button>
      <div className="h-[21px] flex-1 border-y border-l border-[#c8c8c8]" />
    </div>
  </main>
);

/* ---------- status bar ---------- */

const StatusBar = () => (
  <footer className="flex h-[35px] shrink-0 items-center border-t-2 border-[#999] pb-[2px] text-[12px] leading-4 text-[#222]">
    <button aria-label="tree" className="ml-[2px] flex h-[22px] w-[21px] items-center justify-center border border-[#999] bg-[#d4d4d4]"><Icon name="tree" /></button>
    <button aria-label="browser" className="ml-1 flex size-[22px] items-center justify-center border border-[#c8c8c8]"><Icon name="globe" /></button>
    <span className="ml-[9px] h-[22px] w-px bg-[#c8c8c8]" />
    <span className="ml-[7px] size-[5px] rounded-full bg-[#0d5c85]" />
    <p className="ml-[5px] flex-1 font-['Noto_Sans_CJK_SC',sans-serif]">零件的自动重新生成已经完成。</p>
    <div className="flex h-[27px] items-center">
      <span className="h-full w-9 border-l border-[#c8c8c8]" />
      <span className="flex h-full w-9 items-center justify-center gap-[2px] border-l border-[#c8c8c8]">
        <i className="size-[6px] rounded-full bg-[#c8c8c8]" />
        <i className="size-[10px] rounded-full bg-[#ffff00]" />
        <i className="size-[6px] rounded-full bg-[#c8c8c8]" />
      </span>
      <span className="flex h-full w-[41px] items-center border-l border-[#c8c8c8] pl-1"><Icon name="flag" /></span>
      <span className="flex h-full w-[47px] items-center justify-center border-x border-[#c8c8c8]">
        <button aria-label="find" className="flex h-[25px] w-10 items-center justify-center rounded-[3px] border border-[#bbb]"><Icon name="binoculars" /></button>
      </span>
    </div>
    <div className="relative mr-[18px] ml-[97px] w-[176px]">
      <select aria-label="filter" className="block h-[19px] w-full appearance-none border border-[#c8c8c8] bg-white pl-[6px] leading-4 outline-none">
        <option>常规</option>
      </select>
      <span className="pointer-events-none absolute inset-y-0 right-0 flex w-[15px] items-center justify-center border border-[#c8c8c8]"><Caret /></span>
    </div>
  </footer>
);

/* ---------- floating capture window ---------- */

const PushButton = ({ children, off, className }: { children: ReactNode; off?: boolean; className: string }) => (
  <button disabled={off} className={`h-[22px] border border-r-2 border-b-2 border-[#ccc] border-r-[#888] border-b-[#888] bg-white ${off ? "text-[#999]" : "text-black"} ${className}`}>
    {children}
  </button>
);

const Check = ({ label, checked = false }: { label: string; checked?: boolean }) => (
  <label className="flex h-[22px] items-center gap-[5px] pl-[2px]">
    <span className="relative size-[15px]">
      <input type="checkbox" defaultChecked={checked} className="peer block size-[15px] appearance-none border border-[#888] border-r-[#ccc] border-b-[#ccc] bg-white" />
      <svg viewBox="0 0 15 15" className="pointer-events-none absolute inset-0 hidden peer-checked:block">
        <path d="M3 7l3 3 6-6" fill="none" stroke="#000" strokeWidth="2" />
      </svg>
    </span>
    {label}
  </label>
);

const Legend = ({ children }: { children: ReactNode }) => (
  <h3 className="flex h-4 items-center gap-[4px]">
    <span className="h-px w-[9px] bg-black" />
    {children}
    <span className="h-px flex-1 bg-black" />
  </h3>
);

const Drop = ({ id, value, className }: { id: string; value: string; className: string }) => (
  <span className={`relative ${className}`}>
    <select id={id} className="block h-[17px] w-full appearance-none border border-r-2 border-b-2 border-black bg-white pr-2 text-center leading-[14px] font-bold outline-none">
      <option>{value}</option>
    </select>
    <svg viewBox="0 0 8 7" className="pointer-events-none absolute top-[5px] right-[5px] h-[7px] w-2"><path d="M0 0h8L4 7z" /></svg>
  </span>
);

const CHECKS = [
  { label: "透明", checked: true },
  { label: "记录时间信息", checked: true },
  { label: "循环", checked: true },
  { label: "描边", checked: true },
  { label: "捕捉光标", checked: true },
  { label: "Explorer 2.0 兼容", checked: false },
];

const CaptureWindow = () => (
  <div className="absolute top-0 right-0 w-[169px] rounded-b-[6px] border border-[#223] bg-gradient-to-b from-[#cdd3fb] via-[#c9f0ff] to-[#6b86b8] px-[5px] pb-1 text-[12px] leading-[15px] font-bold whitespace-nowrap text-black">
    <div className="flex h-6 items-start">
      <span className="flex h-5 flex-1 items-center gap-[5px] text-[13px] font-normal"><Icon name="gif" />Gif-...</span>
      <div className="flex h-[15px] overflow-hidden rounded-b-[4px] border border-t-0 border-[#556]">
        <button aria-label="minimize" className="flex w-7 items-center justify-center border-r border-[#778] bg-[#d3d0ee]"><i className="h-1 w-3 border border-[#555] bg-white" /></button>
        <button aria-label="maximize" className="flex w-[27px] items-center justify-center border-r border-[#778] bg-[#cfe6ee]"><i className="h-[6px] w-[9px] border border-[#aaa] bg-white" /></button>
        <button aria-label="close" className="flex w-[46px] items-center justify-center bg-gradient-to-b from-[#e0908a] to-[#b8322a] text-[12px] leading-3 text-white">X</button>
      </div>
    </div>
    <div className="h-[407px] border border-[#555] bg-white">
      <div className="flex h-[19px] items-center justify-end border-b border-[#ccc] bg-gradient-to-b from-[#ececfb] to-[#cfcff6] pr-[57px] text-[12px] font-normal text-[#777]">编辑(E)</div>
      <div className="px-[3px] pt-[5px]">
        <div className="flex h-[25px] items-center justify-center border-y-[3px] border-double border-black">Unregistered Copy</div>
        <div className="mt-[3px] flex gap-[2px]">
          <PushButton off className="w-[45px]">开始</PushButton>
          <PushButton off className="w-[45px]">捕捉</PushButton>
          <PushButton className="w-[45px]">停止</PushButton>
        </div>
        <p className="mt-[1px] mb-[14px]">0 帧 (0 字节)</p>
        <Legend>捕捉区域</Legend>
        <p>尺寸：1912x1036</p>
        <p>左上角：8,4</p>
        <div className="mt-px flex items-center justify-between">
          <Check label="显示区域" />
          <PushButton off className="w-[70px]">选择区域</PushButton>
        </div>
        <PushButton className="mt-px w-[71px]">刷新屏幕</PushButton>
        <div className="h-[19px]" />
        <Legend>捕捉选项</Legend>
        <div className="flex h-5 items-center gap-[9px]">
          <label htmlFor="fps">帧数/秒：</label>
          <Drop id="fps" value="5 fps" className="w-[63px]" />
        </div>
        {CHECKS.map((c) => <Check key={c.label} {...c} />)}
        <div className="flex h-[18px] items-center gap-2">
          <label htmlFor="ratio">录制比例：</label>
          <Drop id="ratio" value="100%" className="w-[58px]" />
        </div>
      </div>
    </div>
  </div>
);

const UploadPill = () => (
  <button className="absolute top-[23px] right-[106px] flex h-[25px] w-[104px] items-stretch overflow-hidden rounded-[3px] border border-[#3a86c8] bg-gradient-to-b from-[#d4f4ff] to-[#8cc8f4] text-[12px] leading-[22px] text-[#5a7fa8]">
    <span className="flex w-[29px] items-center justify-center bg-[#2f8fdc]">
      <svg viewBox="0 0 22 18" className="h-[18px] w-[22px]" fill="none" stroke="#fff" strokeWidth="2.500">
        <circle cx="11" cy="5" r="3.500" />
        <circle cx="6" cy="11.500" r="4" />
        <path d="M12 8q4-1 6 2v5" />
        <circle cx="20" cy="15" r=".8" strokeWidth="1" />
      </svg>
    </span>
    <span className="flex-1 text-center">拖拽上传</span>
  </button>
);

export default function App() {
  return (
    <div className="relative flex h-screen flex-col overflow-hidden border border-black bg-white font-['Liberation_Sans','Noto_Sans_CJK_SC',sans-serif]">
      <div className="flex min-h-0 flex-1 flex-col border-r-[3px] border-b-[3px]" style={{ borderColor: LINE }}>
        <QuickAccess />
        <Tabs />
        <Ribbon />
        <div className="flex min-h-0 flex-1">
          <SidePanel />
          <Canvas />
        </div>
        <StatusBar />
      </div>
      <span className="absolute right-[-35px] bottom-[35px] size-11 rounded-full border border-[#666] bg-[#ff9a00]" />
      <CaptureWindow />
      <UploadPill />
    </div>
  );
}
